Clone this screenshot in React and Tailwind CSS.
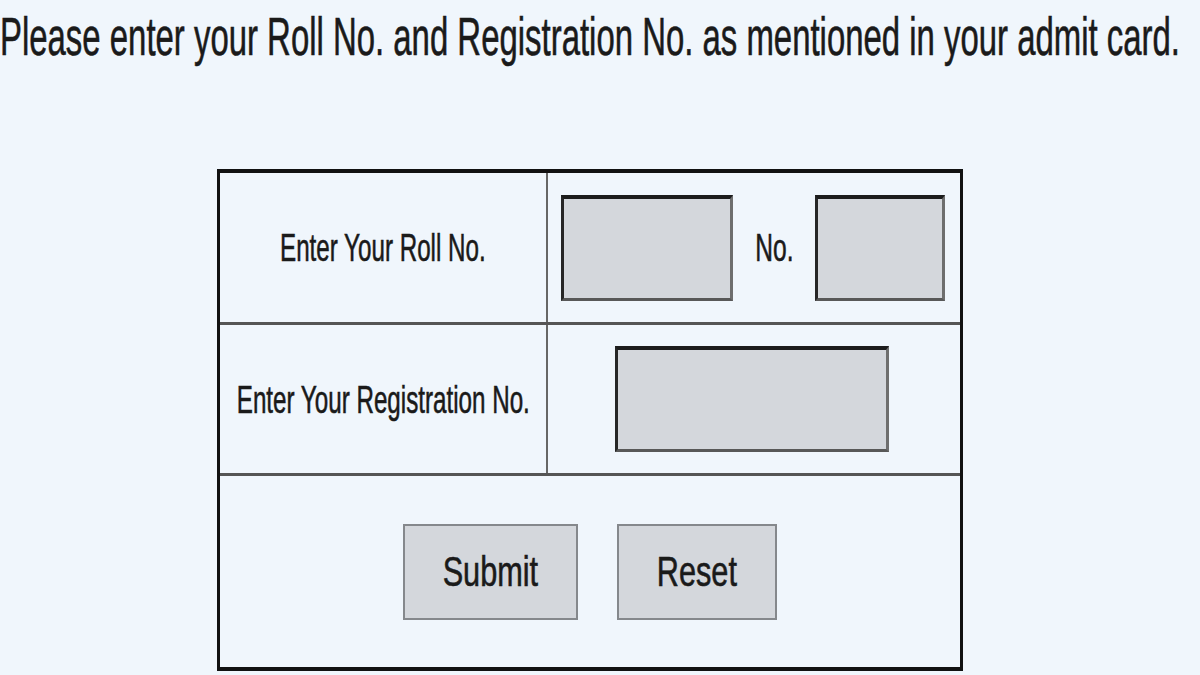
import React from 'react';

// text in the reference is horizontally squeezed, so each label is scaled on x
function Squeezed({ children, className = '' }) {
    return (
        <span className={`inline-block shrink-0 whitespace-nowrap [-webkit-text-stroke:0.6px_#1a1a1a] ${className}`}>
            {children}
        </span>
    );
}

function Field({ className = '' }) {
    return (
        <input
            type="text"
            className={`h-[106px] bg-[#d4d7dc] border-t-[4px] border-l-[3px] border-r-[3px] border-b-[3px] border-t-[#1c1c1c] border-l-[#262626] border-r-[#6e6e6e] border-b-[#585858] outline-none ${className}`}
        />
    );
}

export default function App() {
    return (
        <div className="w-[1200px] h-[675px] overflow-hidden bg-[#f0f6fc] text-[#1a1a1a] font-['Liberation_Sans',Arial,sans-serif]">
            {/* Heading */}
            <div className="h-[169px] pt-[10px] overflow-hidden">
                <Squeezed className="origin-left scale-x-[0.621] text-[53px] leading-[53px]">
                    Please enter your Roll No. and Registration No. as mentioned in your admit card.
                </Squeezed>
            </div>

            {/* Form table */}
            <div className="ml-[217px] w-[746px] h-[502px] flex flex-col border-t-[4px] border-b-[4px] border-x-[3px] border-[#111]">
                <div className="flex h-[152px] border-b-[3px] border-[#555]">
                    <div className="w-[328px] shrink-0 flex items-center justify-center border-r-2 border-[#666]">
                        <Squeezed className="scale-x-[0.62] text-[39px] leading-[39px]">Enter Your Roll No.</Squeezed>
                    </div>
                    <div className="flex-1 flex items-center pl-[13px]">
                        <Field className="w-[172px]" />
                        <div className="w-[82px] flex justify-center">
                            <Squeezed className="scale-x-[0.63] text-[39px] leading-[39px]">No.</Squeezed>
                        </div>
                        <Field className="w-[130px]" />
                    </div>
                </div>

                <div className="flex h-[151px] border-b-[3px] border-[#555]">
                    <div className="w-[328px] shrink-0 flex items-center justify-center border-r-2 border-[#666]">
                        <Squeezed className="scale-x-[0.62] text-[39px] leading-[39px]">Enter Your Registration No.</Squeezed>
                    </div>
                    <div className="flex-1 flex items-center justify-center pr-[4px]">
                        <Field className="w-[274px]" />
                    </div>
                </div>

                <div className="flex-1 flex items-center justify-center gap-[39px]">
                    <button className="w-[175px] h-[96px] bg-[#d4d7dc] border-2 border-[#85888c] flex items-center justify-center">
                        <Squeezed className="scale-x-[0.73] text-[42px] leading-[42px]">Submit</Squeezed>
                    </button>
                    <button className="w-[160px] h-[96px] bg-[#d4d7dc] border-2 border-[#85888c] flex items-center justify-center">
                        <Squeezed className="scale-x-[0.73] text-[42px] leading-[42px]">Reset</Squeezed>
                    </button>
                </div>
            </div>
        </div>
    );
}
